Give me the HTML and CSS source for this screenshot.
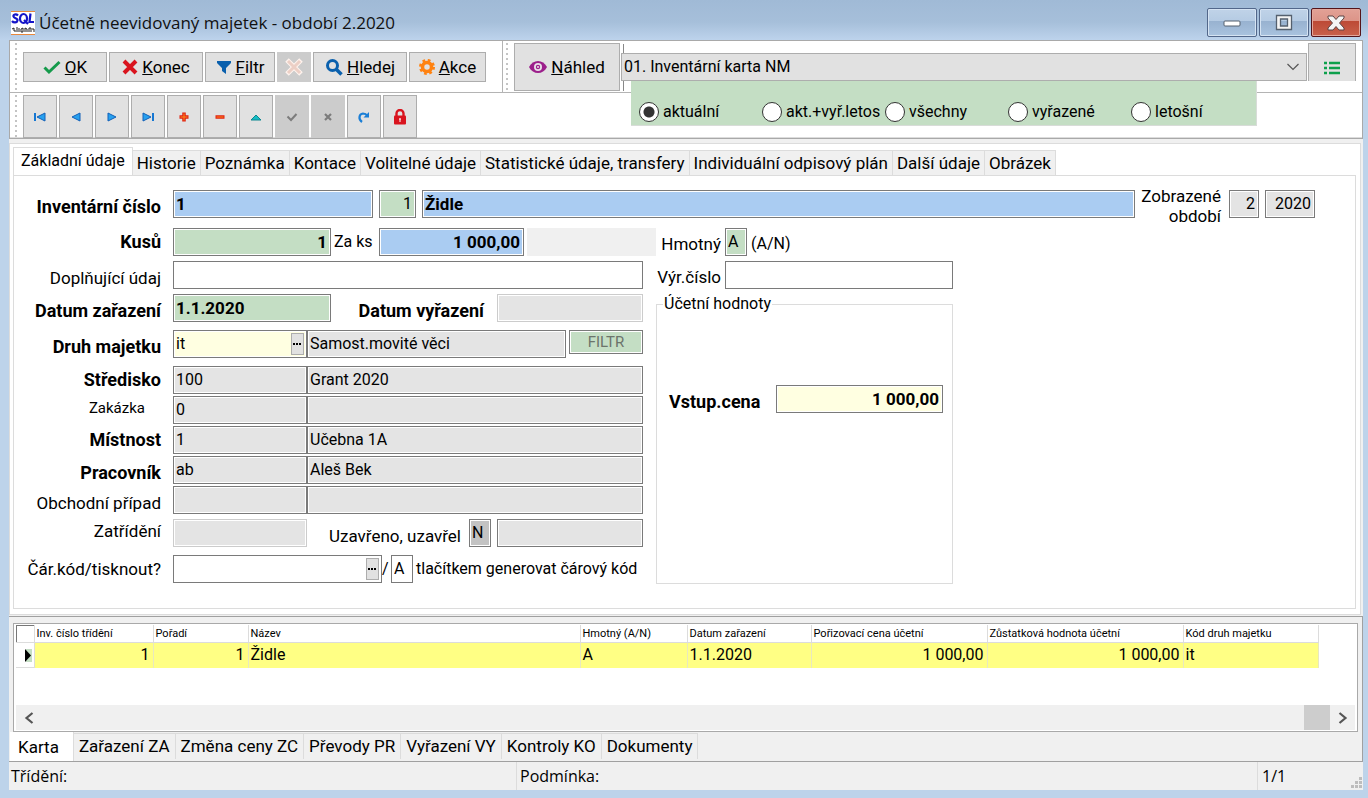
FILE: index.html
```html
<!DOCTYPE html>
<html lang="cs">
<head>
<meta charset="utf-8">
<title>Účetně neevidovaný majetek</title>
<link rel="stylesheet" href="styles.css">
</head>
<body>
<div class="window">
  <header class="titlebar">
    <svg class="app-icon" width="24" height="24" viewBox="0 0 24 24" aria-hidden="true">
      <rect width="24" height="24" fill="#fff"/>
      <path d="M0 .5h24M0 23.5h24" stroke="#e8883c"/>
      <path d="M7 4.500C5 2.500 2 3.500 2.500 5.500S7 7 6.500 9.500 2.500 12 1 10" fill="none" stroke="#1414c8" stroke-width="2.200"/>
      <ellipse cx="12.500" cy="7.500" rx="3.500" ry="4.500" fill="none" stroke="#1414c8" stroke-width="2.200"/>
      <path d="M13 9l4 4M19.500 2.500l-1 8.500H23" fill="none" stroke="#1414c8" stroke-width="2.200"/>
      <path d="M1 18l2-1 0 3 2 0M6 16v5M8 17v4M10 18l2-1v4h-2zM14 21v-4l2 1v3M18 21v-4h2v4M21 18l2 0v3" fill="none" stroke="#222"/>
    </svg>
    <h1 class="title">Účetně neevidovaný majetek - období 2.2020</h1>
    <div class="win-buttons">
      <button class="win-btn" aria-label="Minimalizovat"><svg width="20" height="20" viewBox="0 0 20 20"><rect x="2" y="8" width="16" height="5" rx="1" fill="#fff" stroke="#55606e"/></svg></button>
      <button class="win-btn" aria-label="Maximalizovat"><svg width="20" height="20" viewBox="0 0 20 20"><path d="M2.500 2.500h15v14h-15zM6.500 6v7h7v-7z" fill="#f4f4f4" fill-rule="evenodd" stroke="#55606e" stroke-width="1.300"/></svg></button>
      <button class="win-btn win-close" aria-label="Zavřít"><svg width="20" height="20" viewBox="0 0 20 20"><path d="M2 3h5l3 3.500L13 3h5v2l-4.500 5L18 15v2h-5l-3-3.500L7 17H2v-2l4.500-5L2 5z" fill="#f4f4f4" stroke="#5c4545"/></svg></button>
    </div>
  </header>

  <main class="client">
    <div class="toolbars">
      <div class="band-row">
        <div class="band band-main">
          <i class="grip"></i>
          <button class="tool w-ok"><svg width="18" height="18" viewBox="0 0 18 18"><path d="M1.500 9.500l4.500 4.500L16.500 4" fill="none" stroke="#159a4b" stroke-width="3"/></svg><span><u>O</u>K</span></button>
          <button class="tool w-wide"><svg width="16" height="16" viewBox="0 0 16 16"><path d="M2 2l12 12M14 2L2 14" stroke="#d9141e" stroke-width="4"/></svg><span><u>K</u>onec</span></button>
          <button class="tool w-filter"><svg width="16" height="16" viewBox="0 0 16 16"><path d="M1 2h14v2l-5 5v6l-4-3V9L1 4z" fill="#0a60ad"/></svg><span><u>F</u>iltr</span></button>
          <button class="tool w-clear off" aria-label="Zrušit filtr"><svg width="18" height="18" viewBox="0 0 18 18"><path d="M2 2l14 14M16 2L2 16" stroke="#fff3ee" stroke-width="5"/><path d="M3 3l12 12M15 3L3 15" stroke="#eccfc5" stroke-width="3"/></svg></button>
          <button class="tool w-wide"><svg width="18" height="18" viewBox="0 0 18 18"><circle cx="7.500" cy="7.500" r="5" fill="none" stroke="#0a60ad" stroke-width="3"/><path d="M11 11l5.500 5.500" stroke="#0a60ad" stroke-width="3.500"/></svg><span><u>H</u>ledej</span></button>
          <button class="tool w-akce"><svg width="16" height="16" viewBox="0 0 16 16"><circle cx="8" cy="8" r="4.500" fill="none" stroke="#ff8210" stroke-width="3.500"/><circle cx="8" cy="8" r="6.500" fill="none" stroke="#ff8210" stroke-width="3" stroke-dasharray="2.600 2.500"/></svg><span><u>A</u>kce</span></button>
        </div>
        <div class="band band-print">
          <i class="grip"></i>
          <button class="tool preview"><svg width="18" height="14" viewBox="0 0 18 14"><path d="M0 7C4-1 14-1 18 7 14 15 4 15 0 7z" fill="#9c1f8b"/><circle cx="9" cy="7" r="4" fill="#e8e0e8"/><circle cx="9" cy="7" r="2.200" fill="#9c1f8b"/><circle cx="9" cy="7" r="1" fill="#e8e0e8"/></svg><span><u>N</u>áhled</span></button>
          <div class="report">
            <select class="report-select" aria-label="Sestava"><option>01. Inventární karta NM</option></select>
            <svg class="chevron" width="12" height="8" viewBox="0 0 12 8"><path d="M.5 1L6 6.500 11.500 1" fill="none" stroke="#555" stroke-width="1.200"/></svg>
            <div class="scope" role="radiogroup" aria-label="Rozsah">
              <label><input type="radio" name="scope" checked>aktuální</label>
              <label><input type="radio" name="scope">akt.+vyř.letos</label>
              <label><input type="radio" name="scope">všechny</label>
              <label><input type="radio" name="scope">vyřazené</label>
              <label><input type="radio" name="scope">letošní</label>
            </div>
          </div>
          <button class="tool list-btn" aria-label="Seznam"><svg width="16" height="14" viewBox="0 0 16 14"><path d="M0 2h3M5 2h11M0 7h3M5 7h11M0 12h3M5 12h11" stroke="#0da04c" stroke-width="2.500"/></svg></button>
        </div>
      </div>
      <div class="nav-row">
        <i class="grip"></i>
        <button class="nav" aria-label="První"><svg width="14" height="12" viewBox="0 0 14 12"><path d="M2 2v8" stroke="#1677d2" stroke-width="2"/><path d="M12 2v8L4 6z" fill="#27a0ee" stroke="#1260b8"/></svg></button>
        <button class="nav" aria-label="Předchozí"><svg width="14" height="12" viewBox="0 0 14 12"><path d="M11 2v8L3 6z" fill="#27a0ee" stroke="#1260b8"/></svg></button>
        <button class="nav" aria-label="Další"><svg width="14" height="12" viewBox="0 0 14 12"><path d="M3 2v8l8-4z" fill="#27a0ee" stroke="#1260b8"/></svg></button>
        <button class="nav" aria-label="Poslední"><svg width="14" height="12" viewBox="0 0 14 12"><path d="M12 2v8" stroke="#1677d2" stroke-width="2"/><path d="M2 2v8l8-4z" fill="#27a0ee" stroke="#1260b8"/></svg></button>
        <button class="nav" aria-label="Přidat"><svg width="14" height="12" viewBox="0 0 14 12"><path d="M7 1.500v9M2.500 6h9" stroke="#e02010" stroke-width="3.500"/><path d="M7 2.500v7M3.500 6h7" stroke="#ff8a1c"/></svg></button>
        <button class="nav" aria-label="Odebrat"><svg width="14" height="12" viewBox="0 0 14 12"><path d="M2.500 6h9" stroke="#e02010" stroke-width="3.500"/><path d="M3.500 6h7" stroke="#ff8a1c"/></svg></button>
        <button class="nav" aria-label="Upravit"><svg width="14" height="12" viewBox="0 0 14 12"><path d="M2 9h10L7 4z" fill="#16bcc4" stroke="#0d8790"/></svg></button>
        <button class="nav off" aria-label="Potvrdit"><svg width="14" height="12" viewBox="0 0 14 12"><path d="M2.500 5.500L6 9l5.500-6" fill="none" stroke="#7c7c7c" stroke-width="2"/></svg></button>
        <button class="nav off" aria-label="Storno"><svg width="14" height="12" viewBox="0 0 14 12"><path d="M4 3l6 6M10 3L4 9" stroke="#7c7c7c" stroke-width="2.200"/></svg></button>
        <button class="nav" aria-label="Obnovit"><svg width="14" height="12" viewBox="0 0 14 12"><path d="M5 11C1 8 2 3 6 2.500c2 0 3.500 1 4.500 2.500" fill="none" stroke="#1c7fd6" stroke-width="2.200"/><path d="M12 1v5.500H6.500z" fill="#1c7fd6"/></svg></button>
        <button class="nav" aria-label="Zamknout"><svg width="14" height="16" viewBox="0 0 14 16"><path d="M3.500 7V4.500a3.500 3.500 0 0 1 7 0V7" fill="none" stroke="#d9141e" stroke-width="2.400"/><rect x="1" y="6.500" width="12" height="9" rx="1" fill="#d9141e"/><path d="M7 9.500v3.500M6 10h2" stroke="#fff"/></svg></button>
      </div>
    </div>

    <section class="card">
      <nav class="tabs">
        <button class="tab tab-on">Základní údaje</button><button class="tab">Historie</button><button class="tab">Poznámka</button><button class="tab">Kontace</button><button class="tab">Volitelné údaje</button><button class="tab">Statistické údaje, transfery</button><button class="tab">Individuální odpisový plán</button><button class="tab">Další údaje</button><button class="tab">Obrázek</button>
      </nav>
      <form class="sheet">
        <div class="row row-top">
          <label class="lbl bold low" for="inv">Inventární číslo</label>
          <input id="inv" class="f blue bold w200" value="1">
          <input class="f green num w37" value="1" aria-label="Pořadí">
          <input class="f blue bold grow" value="Židle" aria-label="Název">
          <label class="period" for="per">Zobrazené období</label>
          <input id="per" class="f gray num w30" value="2" readonly>
          <input class="f gray num w50" value="2020" aria-label="Rok" readonly>
        </div>
        <div class="columns">
          <div class="left">
            <div class="row">
              <label class="lbl bold" for="ks">Kusů</label>
              <input id="ks" class="f green bold num w158" value="1">
              <label class="za" for="zaks">Za ks</label>
              <input id="zaks" class="f blue bold num w145" value="1 000,00">
              <span class="filler"></span>
            </div>
            <div class="row g5">
              <label class="lbl low" for="dopl">Doplňující údaj</label>
              <input id="dopl" class="f w470">
            </div>
            <div class="row g5">
              <label class="lbl bold low" for="dz">Datum zařazení</label>
              <input id="dz" class="f green bold w158" value="1.1.2020">
              <label class="mid bold low" for="dv">Datum vyřazení</label>
              <input id="dv" class="f gray dim w146" readonly>
            </div>
            <div class="row g8">
              <label class="lbl bold low" for="druh">Druh majetku</label>
              <span class="pick w134"><input id="druh" class="f cream" value="it"><button type="button" class="dots" aria-label="Vybrat druh"><svg width="9" height="2" viewBox="0 0 9 2"><path d="M0 1h2M3 1h2M6 1h2" stroke="#000" stroke-width="2"/></svg></button></span>
              <input class="f gray w259" value="Samost.movité věci" aria-label="Název druhu" readonly>
              <button type="button" class="filtr">FILTR</button>
            </div>
            <div class="row g8">
              <label class="lbl bold" for="str">Středisko</label>
              <input id="str" class="f gray w134" value="100" readonly><input class="f gray w336" value="Grant 2020" aria-label="Název střediska" readonly>
            </div>
            <div class="row g2">
              <label class="lbl small" for="zak">Zakázka</label>
              <input id="zak" class="f gray w134" value="0" readonly><input class="f gray w336" aria-label="Název zakázky" readonly>
            </div>
            <div class="row g2">
              <label class="lbl bold" for="mist">Místnost</label>
              <input id="mist" class="f gray w134" value="1" readonly><input class="f gray w336" value="Učebna 1A" aria-label="Název místnosti" readonly>
            </div>
            <div class="row g2">
              <label class="lbl bold low" for="prac">Pracovník</label>
              <input id="prac" class="f gray w134" value="ab" readonly><input class="f gray w336" value="Aleš Bek" aria-label="Jméno pracovníka" readonly>
            </div>
            <div class="row g2">
              <label class="lbl low" for="obch">Obchodní případ</label>
              <input id="obch" class="f gray w134" readonly><input class="f gray w336" aria-label="Název případu" readonly>
            </div>
            <div class="row g5">
              <label class="lbl high" for="zatr">Zatřídění</label>
              <input id="zatr" class="f gray dim w134" readonly>
              <label class="closed low" for="uz">Uzavřeno, uzavřel</label>
              <input id="uz" class="f dark w22" value="N">
              <input class="f gray w146" aria-label="Uzavřel" readonly>
            </div>
            <div class="row g8">
              <label class="lbl" for="kod">Čár.kód/tisknout?</label>
              <span class="pick w209"><input id="kod" class="f"><button type="button" class="dots" aria-label="Vybrat kód"><svg width="9" height="2" viewBox="0 0 9 2"><path d="M0 1h2M3 1h2M6 1h2" stroke="#000" stroke-width="2"/></svg></button></span>
              <span class="slash">/</span>
              <input id="tisk" class="f w22" value="A">
              <label class="after" for="tisk">tlačítkem generovat čárový kód</label>
            </div>
          </div>
          <div class="right">
            <div class="row">
              <label class="rlbl" for="hm">Hmotný</label>
              <input id="hm" class="f green w22" value="A">
              <span class="hint">(A/N)</span>
            </div>
            <div class="row g5">
              <label class="rlbl" for="vyr">Výr.číslo</label>
              <input id="vyr" class="f grow">
            </div>
            <fieldset class="values">
              <legend>Účetní hodnoty</legend>
              <div class="row">
                <label class="bold low" for="cena">Vstup.cena</label>
                <input id="cena" class="f cream bold num w167" value="1 000,00">
              </div>
            </fieldset>
          </div>
        </div>
      </form>
    </section>

    <section class="list">
      <div class="grid-box">
        <table class="grid">
          <colgroup><col class="c-mark"><col class="c-inv"><col class="c-por"><col class="c-naz"><col class="c-hm"><col class="c-dat"><col class="c-cena"><col class="c-zust"><col class="c-kod"></colgroup>
          <thead><tr><th></th><th>Inv. číslo třídění</th><th>Pořadí</th><th>Název</th><th>Hmotný (A/N)</th><th>Datum zařazení</th><th>Pořizovací cena účetní</th><th>Zůstatková hodnota účetní</th><th>Kód druh majetku</th></tr></thead>
          <tbody><tr><td class="mark"><svg width="8" height="13" viewBox="0 0 8 13"><path d="M2 0h6v13H2z" fill="#c4dec4"/><path d="M1 0l6 6.500L1 13z" fill="#000"/></svg></td><td class="num">1</td><td class="num">1</td><td>Židle</td><td>A</td><td>1.1.2020</td><td class="num">1 000,00</td><td class="num">1 000,00</td><td>it</td></tr></tbody>
        </table>
        <div class="scroll">
          <button class="arrow" aria-label="Doleva"><svg width="10" height="12" viewBox="0 0 10 12"><path d="M8.500 1L2.500 6l6 5" fill="none" stroke="#555" stroke-width="2.200"/></svg></button>
          <span class="thumb"></span>
          <button class="arrow" aria-label="Doprava"><svg width="10" height="12" viewBox="0 0 10 12"><path d="M1.500 1l6 5-6 5" fill="none" stroke="#555" stroke-width="2.200"/></svg></button>
        </div>
      </div>
      <nav class="btabs">
        <button class="btab btab-on">Karta</button><button class="btab">Zařazení ZA</button><button class="btab">Změna ceny ZC</button><button class="btab">Převody PR</button><button class="btab">Vyřazení VY</button><button class="btab">Kontroly KO</button><button class="btab">Dokumenty</button>
      </nav>
    </section>

    <footer class="status">
      <span class="s-sort">Třídění:</span>
      <span class="s-cond">Podmínka:</span>
      <span class="s-count">1/1</span>
      <svg class="sizer" width="12" height="12" viewBox="0 0 12 12"><path d="M8 0h3v3H8zM4 4h3v3H4zM8 4h3v3H8zM0 8h3v3H0zM4 8h3v3H4zM8 8h3v3H8z" fill="#bdbdbd"/></svg>
    </footer>
  </main>
</div>
</body>
</html>
```

FILE: styles.css
```css
* { box-sizing: border-box; }
body {
  margin: 0;
  font: 16px/20px Roboto, "Liberation Sans", sans-serif;
  color: #000;
}
button, input, select { font: inherit; color: inherit; margin: 0; border-radius: 0; }
button { padding: 0; cursor: pointer; }
svg { display: block; flex: none; }

.window {
  display: flex;
  flex-direction: column;
  min-height: 100vh;
  padding: 0 5px 8px 9px;
  background: #bdd3ea linear-gradient(#a0bad6 0, #a6bfda 22px, #bdd3ec 40px) no-repeat 0 0 / 100% 40px;
}
.titlebar { display: flex; align-items: center; gap: 4px; height: 40px; padding: 8px 0 3px 2px; }
.title { flex: 1; margin: 0; font: 17px/28px "Open Sans", "Noto Sans", sans-serif; color: #111; }
.win-buttons { display: flex; gap: 2px; padding-right: 2px; }
.win-btn {
  display: grid;
  place-items: center;
  width: 50px;
  height: 29px;
  border: 1px solid #52678a;
  border-radius: 2px;
  box-shadow: inset 0 0 0 1px #d5e3f2;
  background: linear-gradient(#c0d3e8 0, #b5cbe3 45%, #98b2d0 46%, #a9c3df 100%);
}
.win-close {
  border-color: #54141a;
  box-shadow: inset 0 0 0 1px #e3a79c;
  background: linear-gradient(#e2a196 0, #dc9488 45%, #bd4a36 46%, #c8614c 100%);
}

.client { display: flex; flex: 1; flex-direction: column; background: #f0f0f0; }

/* toolbars */
.toolbars { border: 1px solid #a9a9a9; background: #fff; }
.band-row { display: flex; height: 52px; }
.band { display: flex; border-bottom: 1px solid #b4b4b4; }
.band-main { align-items: center; gap: 2px; width: 493px; padding-left: 5px; border-right: 1px solid #b4b4b4; }
.band-print { flex: 1; padding: 2px 6px 0 3px; }
.grip { align-self: stretch; width: 2px; margin: 2px 4px 0 0; background: repeating-linear-gradient(#c4c4c4 0 2px, #fff 2px 5px); }
.band-print .grip { margin-top: 0; }
.tool {
  display: flex;
  align-items: center;
  justify-content: center;
  gap: 4px;
  height: 30px;
  border: 1px solid #adadad;
  background: #e1e1e1;
  font-size: 17px;
}
.off { border-color: #ccc; background: #ccc; }
.w-ok { width: 84px; }
.w-wide { width: 94px; }
.w-filter { width: 70px; }
.w-clear { width: 34px; }
.w-akce { width: 77px; }
.preview { width: 106px; height: 48px; margin-left: 2px; }
.list-btn { width: 48px; height: 38px; padding-top: 10px; border-bottom: 0; }
.report { position: relative; flex: 1; align-self: flex-start; padding-top: 10px; margin: 0 1px; }
.report::before { content: ""; position: absolute; left: 2px; top: 1px; height: 47px; border-left: 1px solid #888; }
.report-select {
  position: relative;
  display: block;
  appearance: none;
  width: 100%;
  height: 28px;
  padding: 0 2px;
  border: 1px solid #adadad;
  background: #e1e1e1;
}
.chevron { position: absolute; right: 8px; top: 20px; }
.scope {
  position: absolute;
  left: 10px;
  top: 100%;
  z-index: 1;
  display: grid;
  grid-template-columns: repeat(5, 123px);
  width: 626px;
  height: 45px;
  padding: 17px 0 0 8px;
  background: #c4dec4;
  border: solid #d8dcd8;
  border-width: 0 1px 1px 0;
}
.scope label { display: flex; align-items: center; gap: 4px; height: 28px; overflow: hidden; white-space: nowrap; }
.scope input {
  appearance: none;
  flex: none;
  width: 20px;
  height: 20px;
  border: 1px solid #333;
  border-radius: 50%;
  background: #fff;
}
.scope input:checked { background: radial-gradient(circle, #333 0 5px, #fff 6px); }
.nav-row { display: flex; gap: 2px; height: 45px; padding: 2px 0 0 5px; border-bottom: 1px solid #dcdcdc; }
.nav-row .grip { margin-top: 0; }
.nav { display: grid; place-items: center; width: 34px; height: 43px; border: 1px solid #adadad; background: #e1e1e1; }
.nav.off { border-color: #ccc; background: #ccc; }

/* card with the form */
.card {
  display: flex;
  flex: 1;
  flex-direction: column;
  margin: 4px 2px 0 0;
  padding: 3px 4px 5px 3px;
  border: 1px solid #dcdcdc;
  background: #fff;
}
.tabs { display: flex; align-items: flex-end; height: 28px; }
.tab { height: 25px; padding: 0 4px; border: 1px solid #dcdcdc; border-left: 0; border-bottom: 0; background: #f0f0f0; font-size: 17px; white-space: nowrap; }
.tab-on { position: relative; z-index: 1; align-self: stretch; height: 28px; margin-bottom: -1px; padding: 0 7px 2px; border-left: 1px solid #dcdcdc; background: #fff; font-size: 16px; }
.sheet { flex: 1; padding: 14px 40px 20px 5px; border: 1px solid #dcdcdc; }
.row { display: flex; align-items: flex-start; height: 28px; }
.columns { display: flex; margin-top: 10px; }
.left { width: 637px; flex: none; }
.right { width: 297px; flex: none; }
.g2 { margin-top: 2px; }
.g5 { margin-top: 5px; }
.g8 { margin-top: 8px; }
.lbl { width: 142px; margin-right: 12px; text-align: right; }
label, .hint, .slash { line-height: 28px; white-space: nowrap; }
.low { line-height: 34px; }
.high { line-height: 24px; }
.bold { font-weight: 700; font-size: 17px; }
.lbl, .rlbl, .closed, .period { font-size: 17px; }
label.bold { font-size: 18px; }
.lbl.small { padding-right: 16px; font-size: 15px; line-height: 24px; }

.f {
  width: 100%;
  height: 28px;
  padding: 0 3px 1px 2px;
  border: 1px solid #7a7a7a;
  background: #fff;
  box-shadow: inset 0 0 0 1px #fff;
  outline: 0;
}
.blue { background: #aaccf2; }
.green { background: #c4dec4; }
.gray { background: #e4e4e4; }
.dark { background: #c3c3c3; }
.cream { background: #ffffe1; }
.dim { border-color: #ccc; }
.num { text-align: right; }
.f.grow { flex: 1; width: auto; min-width: 0; }
.w22 { width: 22px; flex: none; }
.w30 { width: 30px; flex: none; }
.w37 { width: 37px; flex: none; }
.w50 { width: 50px; flex: none; }
.w134 { width: 134px; flex: none; }
.w145 { width: 145px; flex: none; }
.w146 { width: 146px; flex: none; }
.w158 { width: 158px; flex: none; }
.w167 { width: 167px; flex: none; }
.w200 { width: 200px; flex: none; }
.w209 { width: 209px; flex: none; }
.w259 { width: 259px; flex: none; }
.w336 { width: 336px; flex: none; }
.w470 { width: 470px; flex: none; }
.row-top { gap: 6px; }
.row-top .lbl { margin-right: 6px; }
.period { align-self: center; width: 80px; margin-right: 2px; padding-top: 4px; line-height: 20px; white-space: normal; text-align: right; }
.za { width: 48px; padding-left: 3px; }
.filler { flex: 1; height: 28px; margin-left: 3px; background: #f0f0f0; }
.mid { width: 166px; padding-right: 13px; text-align: right; }
.closed { width: 162px; padding-right: 8px; text-align: right; }
.closed + .f { margin-right: 6px; }
.slash { width: 9px; }
.after { padding-left: 3px; }
.pick { position: relative; }
.dots { position: absolute; right: 3px; top: 3px; display: grid; place-items: center; width: 13px; height: 22px; border: 1px solid #adadad; background: #e1e1e1; }
.filtr { width: 74px; height: 24px; margin-left: 3px; border: 1px solid #7a7a7a; background: #c4dec4; box-shadow: inset 0 0 0 1px #fff; color: #6b746b; font-size: 15px; }
.rlbl { width: 69px; padding: 2px 4px 0 0; text-align: right; }
.hint { padding: 2px 0 0 4px; }
.values { height: 290px; margin: 5px 0 0; padding: 71px 9px 0 12px; border: 1px solid #dcdcdc; }
.values legend { padding: 0 1px; margin-left: -6px; }
.values .row { justify-content: space-between; }

/* record list */
.list { margin-top: 1px; padding: 2px 2px 0 1px; border: solid #a0a0a0; border-width: 1px 1px 1px 0; }
.grid-box { margin: 4px 2px 0 3px; padding: 1px 2px; border: 1px solid #a9a9a9; background: #fff; }
.grid { width: 1302px; table-layout: fixed; border-collapse: collapse; }
.c-mark { width: 18px; } .c-inv { width: 119px; } .c-por { width: 95px; } .c-naz { width: 332px; }
.c-hm { width: 107px; } .c-dat { width: 124px; } .c-cena { width: 176px; } .c-zust { width: 196px; } .c-kod { width: 135px; }
.grid th { height: 18px; padding: 0 2px; border: solid #dcdcdc; border-width: 0 1px 1px 0; font-size: 11px; line-height: 17px; font-weight: 400; text-align: left; white-space: nowrap; }
.grid th:first-child { box-shadow: inset 1px 1px #777; }
.grid td { height: 25px; padding: 0 3px 0 2px; border-right: 1px solid #e8e8c0; background: #ffff84; }
.grid td.mark { padding: 0 2px; background: #fff; border-right-color: #dcdcdc; border-bottom: 1px solid #dcdcdc; }
.mark svg { margin-left: auto; }
.scroll { display: flex; align-items: center; height: 25px; margin-top: 37px; background: #f0f0f0; }
.arrow { display: grid; place-items: center; width: 25px; height: 25px; border: 0; background: none; }
.thumb { width: 26px; height: 25px; margin-left: auto; background: #cdcdcd; }
.btabs { display: flex; height: 29px; }
.btab { height: 26px; margin-top: 1px; padding: 0 5px 2px; border: 0; border-right: 1px solid #dcdcdc; border-top: 1px solid #dcdcdc; background: #f0f0f0; font-size: 17px; white-space: nowrap; }
.btab-on { height: 29px; margin-top: 0; padding: 0 14px 0 8px; border-top: 0; background: #fff; }

.status { display: flex; height: 28px; font: 16px/28px "Open Sans", "Noto Sans", sans-serif; }
.s-sort { width: 508px; padding-left: 2px; border-right: 1px solid #dcdcdc; }
.s-cond { flex: 1; padding-left: 3px; border-right: 1px solid #dcdcdc; }
.s-count { width: 93px; padding-left: 4px; }
.sizer { align-self: flex-end; margin-bottom: 1px; }
```
